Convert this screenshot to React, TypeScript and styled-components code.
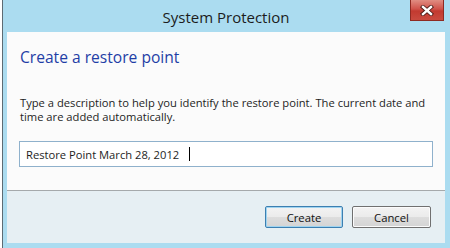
import React, { FC } from 'react'
import styled, { createGlobalStyle } from 'styled-components'

const GlobalStyle = createGlobalStyle`
  html, body {
    margin: 0;
    padding: 0;
    background: #ffffff;
  }
  body {
    font-family: 'Open Sans', 'Noto Sans', 'DejaVu Sans', sans-serif;
    color: #1e1e1e;
  }
`

const Frame = styled.div`
  box-sizing: border-box;
  width: 448px;
  height: 248px;
  margin-left: 2px;
  border-left: 1px solid #5d6b73;
  padding: 0 5px 5px 4px;
  background: #abdcf0;
  display: flex;
  flex-direction: column;
`

const TitleBar = styled.div`
  height: 32px;
  display: grid;
  grid-template-columns: 1fr auto 1fr;
  align-items: start;
`

const Title = styled.div`
  grid-column: 2;
  font-size: 15px;
  line-height: 34px;
  color: #1c1c1c;
`

const CloseButton = styled.div`
  grid-column: 3;
  justify-self: end;
  margin-right: 1px;
  width: 34px;
  height: 21px;
  box-sizing: border-box;
  border: 1px solid #8e2a22;
  border-top: none;
  background: linear-gradient(#e08d82 0%, #d0524a 45%, #c23a30 55%, #c94a3f 100%);
  display: flex;
  align-items: center;
  justify-content: center;
`

const Content = styled.div`
  background: #fbfbfb;
  height: 159px;
  box-sizing: border-box;
  padding: 15px 12px 0 13px;
  border-bottom: 1px solid #a5a9ab;
`

const Heading = styled.h1`
  margin: 0;
  font-size: 15.6px;
  font-weight: 400;
  line-height: 21px;
  color: #1f3ea6;
`

const Description = styled.p`
  margin: 28px 0 0 0;
  font-size: 11.2px;
  line-height: 14px;
  color: #1e1e1e;
`

const TextField = styled.div`
  margin: 17px 0 0 -1px;
  height: 26px;
  box-sizing: border-box;
  border: 1px solid #8fb1cc;
  background: #ffffff;
  display: flex;
  align-items: center;
  padding-left: 6px;
  font-size: 11.2px;
  color: #1e1e1e;
`

const Caret = styled.span`
  display: inline-block;
  width: 1px;
  height: 14px;
  margin-left: 10px;
  background: #000000;
`

const Footer = styled.div`
  flex: 1;
  background: #e6eff3;
  display: flex;
  justify-content: flex-end;
  align-items: flex-start;
  gap: 9px;
  padding: 15px 14px 0 0;
`

const Button = styled.div<{ $default?: boolean }>`
  width: ${p => (p.$default ? 78 : 79)}px;
  height: 22px;
  box-sizing: border-box;
  border: 1px solid ${p => (p.$default ? '#3c7fb1' : '#707070')};
  border-radius: 2px;
  box-shadow: ${p => (p.$default ? 'inset 0 0 0 1px #9fd4f0' : 'inset 0 0 0 1px #fbfbfb')};
  background: linear-gradient(#f3f3f3 0%, #ebebeb 50%, #dddddd 51%, #d4d4d4 100%);
  display: flex;
  align-items: center;
  justify-content: center;
  font-size: 11.3px;
  color: #111111;
`

const App: FC = () => {
  return (
    <>
      <GlobalStyle />
      <Frame>
        <TitleBar>
          <Title>System Protection</Title>
          <CloseButton>
            <svg width="14" height="11" viewBox="0 0 14 11">
              <path d="M3 2 L11 9 M11 2 L3 9" stroke="#4a1a16" strokeWidth="4.2" strokeLinecap="square" />
              <path d="M3 2 L11 9 M11 2 L3 9" stroke="#ffffff" strokeWidth="2.4" strokeLinecap="square" />
            </svg>
          </CloseButton>
        </TitleBar>
        <Content>
          <Heading>Create a restore point</Heading>
          <Description>
            Type a description to help you identify the restore point. The current date and
            <br />
            time are added automatically.
          </Description>
          <TextField>
            Restore Point March 28, 2012
            <Caret />
          </TextField>
        </Content>
        <Footer>
          <Button $default>Create</Button>
          <Button>Cancel</Button>
        </Footer>
      </Frame>
    </>
  )
}

export default App
